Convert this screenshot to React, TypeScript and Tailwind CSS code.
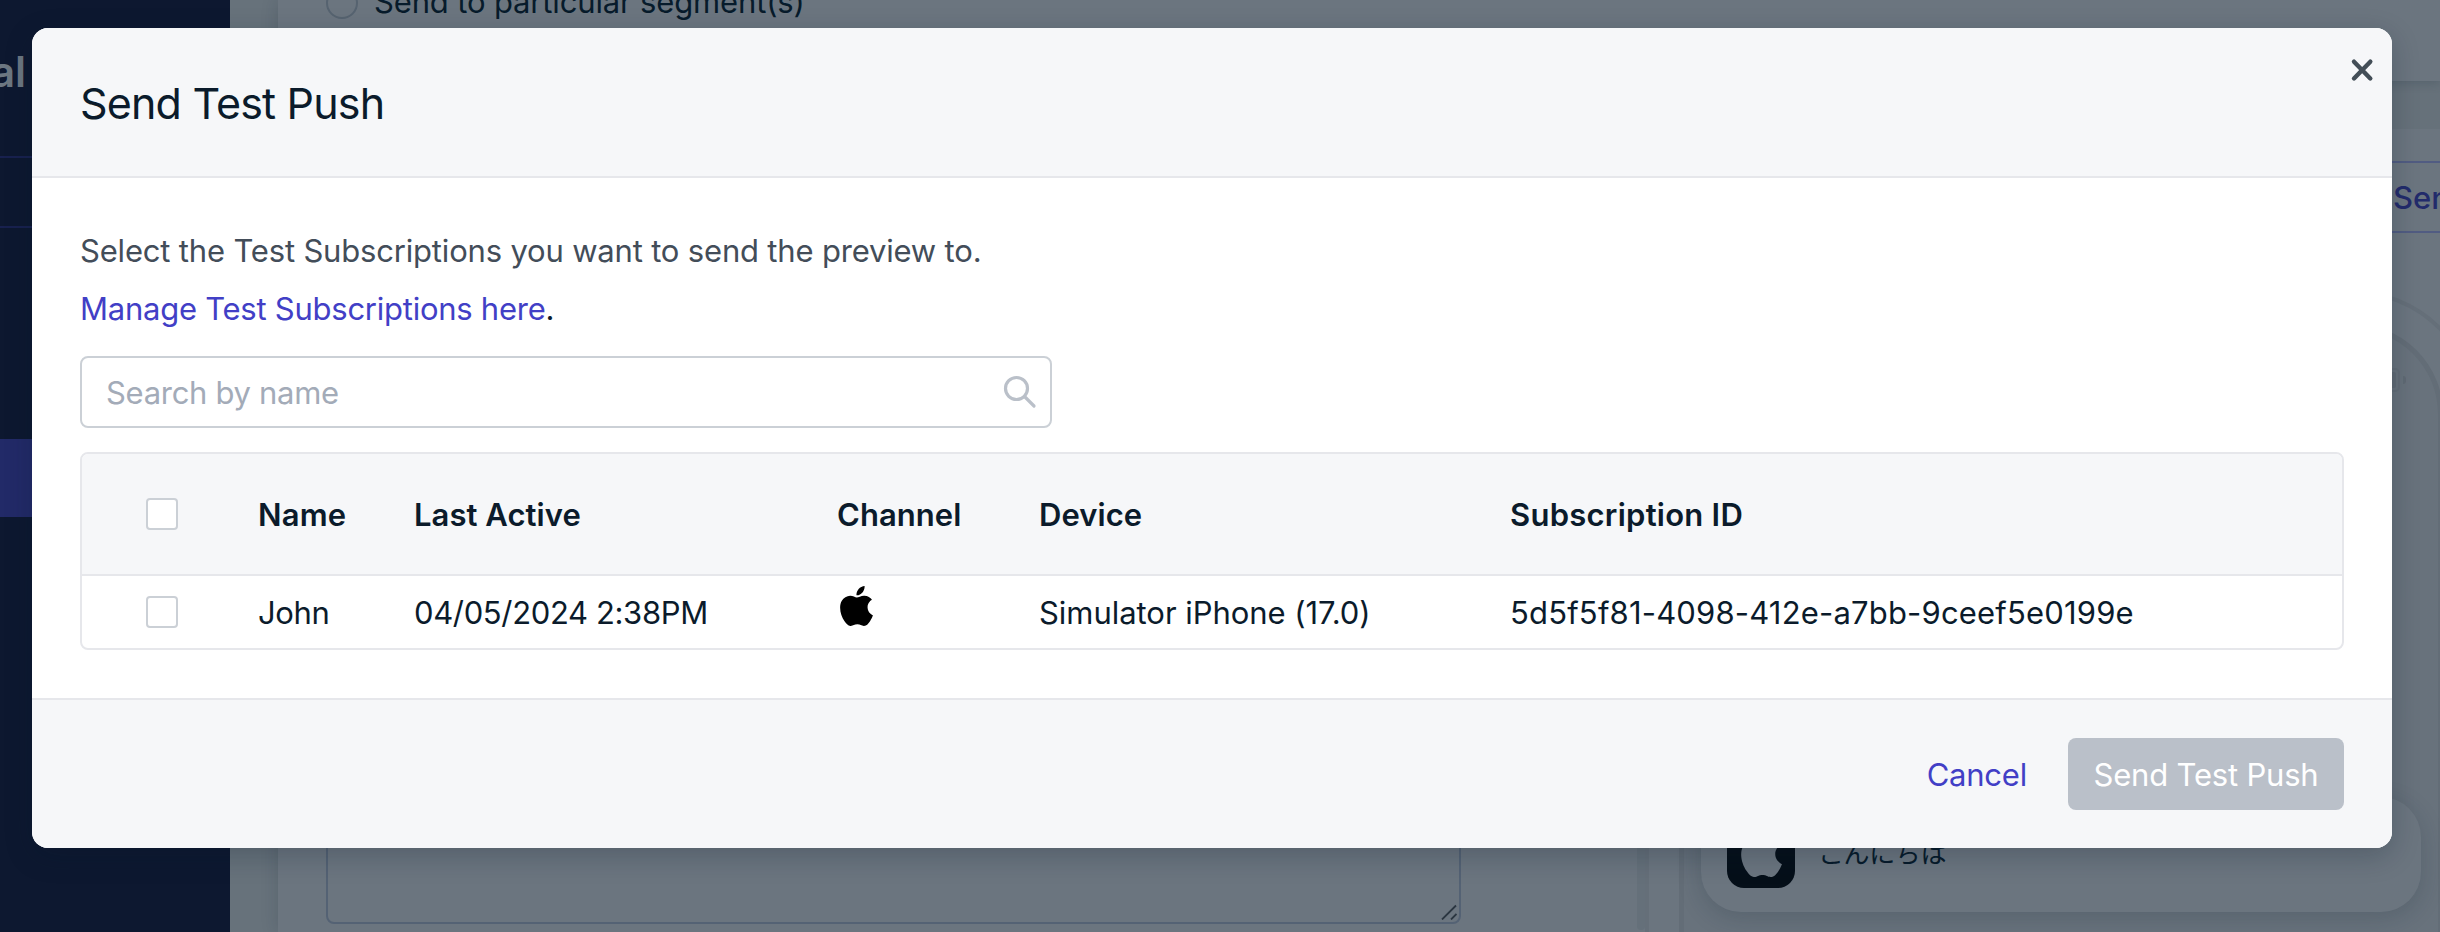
import React from "react";

const APPLE =
  "M18.71 19.5c-.83 1.24-1.71 2.45-3.05 2.47-1.34.03-1.77-.79-3.29-.79-1.53 0-2 .77-3.27.82-1.31.05-2.3-1.32-3.14-2.53C4.25 17 2.94 12.45 4.7 9.39c.87-1.52 2.43-2.48 4.12-2.51 1.28-.02 2.5.87 3.29.87.78 0 2.26-1.07 3.81-.91.65.03 2.47.26 3.64 1.98-.09.06-2.17 1.28-2.15 3.81.03 3.02 2.65 4.03 2.68 4.04-.03.07-.42 1.44-1.38 2.83M13 3.5c.73-.83 1.94-1.46 2.94-1.5.13 1.17-.34 2.35-1.04 3.19-.69.85-1.83 1.51-2.95 1.42-.15-1.15.41-2.35 1.05-3.11z";

function AppleLogo({ className }: { className: string }) {
  return (
    <svg viewBox="3.8 2 16.3 20" preserveAspectRatio="none" className={className} fill="currentColor">
      <path d={APPLE} />
    </svg>
  );
}

function Checkbox() {
  return <span role="checkbox" aria-checked="false" className="block size-8 rounded-[4px] border-2 border-[#cbd0d6] bg-white" />;
}

const COLUMNS = "grid grid-cols-[176px_156px_423px_202px_471px_1fr] items-center";

function Backdrop() {
  return (
    <div className="flex h-full w-full text-[31px] text-[#071b2b]">
      <aside className="flex w-[230px] shrink-0 flex-col bg-[#0d1830]">
        <div className="flex h-[156px] items-start pt-[46px]">
          <span className="ml-[-9px] text-[42px] leading-[52px] font-semibold text-[#6c7782]">al</span>
        </div>
        <div className="h-[72px] border-y-2 border-[#18214f]" />
        <div className="mt-[211px] h-[78px] bg-[#222a68]" />
      </aside>
      <main className="flex min-w-0 grow bg-[#67727b] pl-12">
        <section className="flex w-[1359px] shrink-0 flex-col justify-between bg-[#6b757f] pb-2 pl-12 shadow-[0_0_16px_rgba(20,40,55,0.18)]">
          <div className="-mt-[17px] flex h-[38px] items-center">
            <span className="mt-[2px] size-8 shrink-0 rounded-full border-2 border-[#566370]" />
            <span className="ml-4 leading-[38px] tracking-[-0.15px]">Send to particular segment(s)</span>
          </div>
          <div className="flex h-[160px] w-[1135px] items-end justify-end rounded-lg border-2 border-[#546274] p-[2px]">
            <svg viewBox="0 0 16 16" className="size-4" stroke="#2b3641" strokeWidth="1.8">
              <path d="M1 15.500L15 1.500M10 15.500L15.500 10" />
            </svg>
          </div>
        </section>
        <section className="flex min-w-0 grow flex-col overflow-hidden bg-[#6b757f]">
          <div className="z-10 h-[81px] shrink-0 bg-[#6b757f] shadow-[0_2px_10px_rgba(20,40,55,0.2)]" />
          <div className="flex min-h-0 grow">
            <div className="mb-[2px] w-2 shrink-0 rounded-b bg-[#65707a]" />
            <div className="flex min-w-0 grow flex-col overflow-hidden">
              <div className="h-12 shrink-0 bg-[#66717a]" />
              <div className="mt-8 ml-[600px] flex h-[72px] w-[400px] shrink-0 items-center border-y-2 border-[#515c82] pt-[2px] pl-[148px] text-[#222b6b]">
                <span className="font-medium">Send</span>
              </div>
              <div className="mt-[57px] h-[800px] w-[832px] shrink-0 rounded-[124px] border-[4px] border-[#656f79] p-[30px]">
                <div className="flex h-full w-full flex-col rounded-[90px] border-[5px] border-[#636d77] bg-[#68727c] px-[17px] pt-[39px]">
                  <div className="flex h-[24px] justify-end pr-[15px]">
                    <span className="flex w-[44px] rounded-[5px] border-2 border-[#636d77] p-[2px]">
                      <span className="grow rounded-[2px] bg-[#606a74]" />
                    </span>
                    <span className="ml-[3px] h-2 w-[3px] self-center rounded-r-full bg-[#606a74]" />
                  </div>
                  <div className="mt-[405px] flex h-[115px] w-[720px] shrink-0 items-start rounded-[40px] bg-[#6b757f] pt-[23px] pl-[26px] shadow-[0_6px_24px_rgba(20,40,55,0.2)]">
                    <span className="flex size-[68px] justify-center rounded-[17px] bg-[#050f19] pt-[8px]">
                      <AppleLogo className="h-[49px] w-[41px] text-[#6b757f]" />
                    </span>
                    <span className="ml-[23px] pt-[12px] font-['Noto_Sans_CJK_JP',sans-serif] text-[26px] leading-[40px] font-normal tracking-[-0.4px]">こんにちは</span>
                  </div>
                </div>
              </div>
            </div>
          </div>
        </section>
      </main>
    </div>
  );
}

export default function App() {
  return (
    <div className="relative h-[932px] w-[2440px] overflow-hidden font-['Inter','Liberation_Sans',sans-serif]">
      <Backdrop />
      <div className="absolute inset-0 z-20 flex items-start pt-7 pl-8">
        <div
          role="dialog"
          className="flex h-[820px] w-[2360px] flex-col overflow-hidden rounded-2xl bg-white text-[31px] leading-[38px] tracking-[-0.22px] text-[#0b1b2b] shadow-[0_8px_28px_rgba(10,25,40,0.24)]"
        >
          <header className="flex h-[150px] shrink-0 items-start justify-between border-b-2 border-[#e6e7eb] bg-[#f6f7f9] pr-[18px] pl-12">
            <h2 className="pt-[49px] text-[43px] leading-[52px] tracking-[-0.82px]">Send Test Push</h2>
            <button aria-label="Close" className="mt-[30px]">
              <svg viewBox="0 0 24 24" className="size-6" stroke="#434e57" strokeWidth="4.400" strokeLinecap="round">
                <path d="M4 3.700L20.300 20.500M20.300 3.700L4 20.500" />
              </svg>
            </button>
          </header>

          <div className="flex h-[520px] shrink-0 flex-col px-12 pt-11">
            <p className="h-[58px] leading-[58px] tracking-[-0.18px] text-[#434d59]">Select the Test Subscriptions you want to send the preview to.</p>
            <p className="h-[58px] leading-[58px] tracking-[-0.25px]">
              <a className="text-[#423fc6]">Manage Test Subscriptions here</a>.
            </p>
            <div className="mt-[18px] flex h-[72px] w-[972px] items-center justify-between rounded-lg border-2 border-[#cbd0d6] pr-[13px] pl-[24px]">
              <span className="pt-[2px] tracking-[-0.3px] text-[#a3abb8]">Search by name</span>
              <svg viewBox="0 0 34 34" className="size-[34px]" fill="none" stroke="#bac0c9" strokeLinecap="round">
                <circle cx="13.500" cy="13.500" r="11" strokeWidth="3.200" />
                <path d="M21.500 21.500L31 31" strokeWidth="3.200" />
              </svg>
            </div>

            <div className="mt-6 flex flex-col rounded-lg border-2 border-[#e6e7eb]">
              <div className={`${COLUMNS} h-[122px] rounded-t-md border-b-2 border-[#e6e7eb] bg-[#f6f7f9] font-semibold tracking-[0.15px]`}>
                <span className="pl-16"><Checkbox /></span>
                <span className="pt-[2px]">Name</span>
                <span className="pt-[2px] tracking-[0.05px]">Last Active</span>
                <span className="pt-[2px] tracking-[0.05px]">Channel</span>
                <span className="pt-[2px] tracking-[0.05px]">Device</span>
                <span className="pt-[2px] tracking-[0.25px]">Subscription ID</span>
              </div>
              <div className={`${COLUMNS} h-[72px]`}>
                <span className="pl-16"><Checkbox /></span>
                <span className="pt-[2px] tracking-[-0.35px]">John</span>
                <span className="pt-[2px] tracking-[-0.36px]">04/05/2024 2:38PM</span>
                <span className="pb-3 pl-[3px]"><AppleLogo className="h-10 w-[33px] text-black" /></span>
                <span className="pt-[2px] tracking-[-0.04px]">Simulator iPhone (17.0)</span>
                <span className="pt-[2px] tracking-[0.18px]">5d5f5f81-4098-412e-a7bb-9ceef5e0199e</span>
              </div>
            </div>
          </div>

          <footer className="flex grow items-center justify-end gap-[41px] border-t-2 border-[#e6e7eb] bg-[#f6f7f9] pr-12">
            <button className="pt-[2px] text-[#423fc6]">Cancel</button>
            <button className="h-[72px] w-[276px] rounded-lg bg-[#bac0c9] pt-[2px] tracking-[-0.2px] text-white">Send Test Push</button>
          </footer>
        </div>
      </div>
    </div>
  );
}
